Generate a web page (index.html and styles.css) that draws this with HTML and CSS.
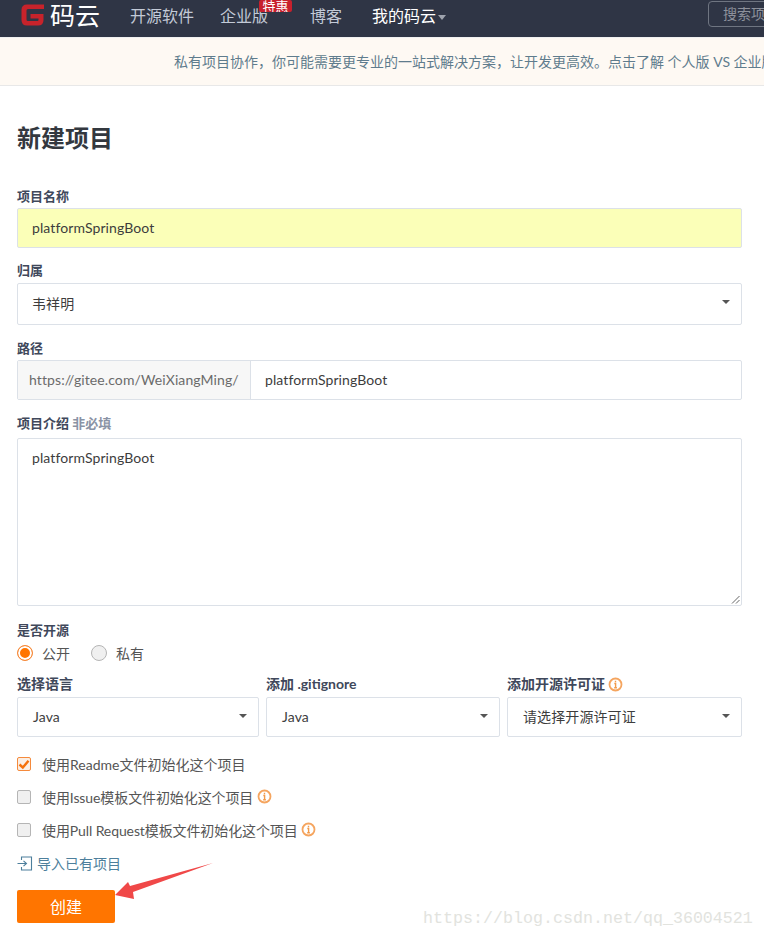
FILE: index.html
```html
<!DOCTYPE html>
<html lang="zh">
<head>
<meta charset="utf-8">
<title>新建项目</title>
<link rel="stylesheet" href="styles.css">
</head>
<body>
<header class="nav">
  <a class="logo">
    <svg class="logo-mark" width="25" height="24" viewBox="0 0 25 24"><path d="M24 1.500H7Q1.500 1.500 1.500 7v10Q1.500 22.500 7 22.500h11q5.500 0 5.500-5.500v-6H10.500v4.500h8v1.500q0 1-1 1H8q-1.500 0-1.500-1.500V7.500Q6.500 6 8 6h16z" fill="#c7232b"/></svg>
    <span class="logo-text">码云</span>
  </a>
  <nav class="nav-links">
    <a class="nav-link nav-open">开源软件</a>
    <a class="nav-link nav-ent">企业版<span class="badge">特惠</span></a>
    <a class="nav-link nav-blog">博客</a>
    <a class="nav-link nav-mine">我的码云<i class="caret-light"></i></a>
  </nav>
  <div class="search">搜索项目</div>
</header>
<div class="notice">私有项目协作，你可能需要更专业的一站式解决方案，让开发更高效。点击了解 个人版 VS 企业版</div>
<main class="main">
  <h1 class="title">新建项目</h1>
  <form class="form">
    <div class="field f-name">
      <label class="label">项目名称</label>
      <div class="control control-yellow">platformSpringBoot</div>
    </div>
    <div class="field f-owner">
      <label class="label">归属</label>
      <div class="control control-select">韦祥明<i class="caret"></i></div>
    </div>
    <div class="field f-path">
      <label class="label">路径</label>
      <div class="path-group">
        <span class="path-prefix">https://gitee.com/WeiXiangMing/</span>
        <span class="path-value">platformSpringBoot</span>
      </div>
    </div>
    <div class="field f-desc">
      <label class="label">项目介绍 <span class="optional">非必填</span></label>
      <div class="textarea">platformSpringBoot
        <svg class="grip" width="9" height="9" viewBox="0 0 9 9"><path d="M8.500 1 1 8.500M8.500 5 5 8.500" stroke="#666" fill="none"/></svg>
      </div>
    </div>
    <div class="field f-open">
      <label class="label">是否开源</label>
      <div class="radios">
        <span class="radio-item"><i class="radio radio-on"></i>公开</span>
        <span class="radio-item"><i class="radio"></i>私有</span>
      </div>
    </div>
    <div class="select-row">
      <div class="select-col">
        <label class="label">选择语言</label>
        <div class="control control-select control-short">Java<i class="caret"></i></div>
      </div>
      <div class="select-col">
        <label class="label">添加 .gitignore</label>
        <div class="control control-select control-short">Java<i class="caret"></i></div>
      </div>
      <div class="select-col">
        <label class="label">添加开源许可证 <svg class="info" width="15" height="15" viewBox="0 0 15 15"><circle cx="7.500" cy="7.500" r="6" fill="none" stroke="#f5a55f" stroke-width="1.800"/><path d="M7.500 3.800v1.500M6.300 6.500h1.300v4M6.200 10.700h2.700" fill="none" stroke="#f29a4a" stroke-width="1.400"/></svg></label>
        <div class="control control-select control-short">请选择开源许可证<i class="caret"></i></div>
      </div>
    </div>
    <div class="checks">
      <div class="check-row"><i class="check check-on"><svg width="14" height="14" viewBox="0 0 14 14"><path d="M2.500 7.500 5.800 10.500 11.500 3.800" fill="none" stroke="#f5700a" stroke-width="2.400"/></svg></i>使用Readme文件初始化这个项目</div>
      <div class="check-row check-tight"><i class="check"></i>使用Issue模板文件初始化这个项目 <svg class="info" width="15" height="15" viewBox="0 0 15 15"><circle cx="7.500" cy="7.500" r="6" fill="none" stroke="#f5a55f" stroke-width="1.800"/><path d="M7.500 3.800v1.500M6.300 6.500h1.300v4M6.200 10.700h2.700" fill="none" stroke="#f29a4a" stroke-width="1.400"/></svg></div>
      <div class="check-row check-tight"><i class="check"></i>使用Pull Request模板文件初始化这个项目 <svg class="info" width="15" height="15" viewBox="0 0 15 15"><circle cx="7.500" cy="7.500" r="6" fill="none" stroke="#f5a55f" stroke-width="1.800"/><path d="M7.500 3.800v1.500M6.300 6.500h1.300v4M6.200 10.700h2.700" fill="none" stroke="#f29a4a" stroke-width="1.400"/></svg></div>
    </div>
    <a class="import"><svg width="16" height="15" viewBox="0 0 16 15"><path d="M4.500 4V1h10v13h-10v-3M0.500 7.500h9M6.500 4.800l3 2.700-3 2.700" fill="none" stroke="#4d7f9c" stroke-width="1.100"/></svg>导入已有项目</a>
    <button class="submit" type="button">创建</button>
  </form>
</main>
<svg class="arrow" width="106" height="40" viewBox="0 0 106 40"><path d="M0 33 13 20 15 24 98 1 18 30 19 37Z" fill="#f04848"/></svg>
<div class="watermark">https://blog.csdn.net/qq_36004521</div>
</body>
</html>
```
FILE: styles.css
```css
* { box-sizing: border-box; }
html, body { margin: 0; padding: 0; }
body {
  width: 764px;
  height: 939px;
  overflow: hidden;
  position: relative;
  background: #fff;
  color: #40485b;
  font-family: Lato, "Noto Sans CJK SC", sans-serif;
  font-size: 14px;
}
.nav {
  height: 37px;
  background: #2f3545;
  display: flex;
  align-items: center;
  padding-left: 20px;
  overflow: hidden;
  white-space: nowrap;
}
.logo { display: flex; flex: none; align-items: center; gap: 5px; width: 110px; height: 37px; padding-bottom: 8px; }
.logo-mark { flex: none; }
.logo-text { color: #fff; font-size: 25px; line-height: 28px; font-weight: 400; }
.nav-links { display: flex; flex: none; }
.nav-link { position: relative; color: #c3cad7; font-size: 16px; line-height: 30px; padding-bottom: 6px; }
.nav-open { margin-right: 26px; }
.nav-ent { margin-right: 42px; }
.nav-blog { margin-right: 30px; }
.nav-mine { color: #fff; }
.badge {
  position: absolute;
  left: 39px;
  top: -1px;
  width: 33px;
  height: 12px;
  line-height: 12px;
  background: #c8202d;
  color: #fff;
  font-size: 13px;
  text-align: center;
  border-radius: 2px;
  overflow: hidden;
}
.caret-light {
  display: inline-block;
  margin-left: 2px;
  vertical-align: 2px;
  border: 4px solid transparent;
  border-top: 5px solid #9ea3ad;
  border-bottom: 0;
}
.search {
  margin-left: 262px;
  align-self: flex-start;
  margin-top: 1px;
  flex: none;
  width: 80px;
  height: 26px;
  border: 1px solid #6f7581;
  border-radius: 4px;
  color: #8d919b;
  font-size: 14px;
  line-height: 24px;
  padding-left: 14px;
}
.notice {
  height: 49px;
  background: #fef9f3;
  border-bottom: 1px solid #e8e8e8;
  border-top: 1px solid #f0f0f0;
  padding-left: 174px;
  color: #5f7c8d;
  font-size: 14px;
  line-height: 47px;
  white-space: nowrap;
  overflow: hidden;
}
.main { padding: 0 22px 0 17px; }
.title { margin: 35px 0 0; height: 34px; line-height: 34px; font-size: 24px; font-weight: 700; color: #33383f; }
.form { display: block; }
.label { display: block; font-weight: 700; font-size: 13px; line-height: 18px; color: #40485b; }
.optional { color: #8a93a5; }
.f-name { margin-top: 32px; }
.f-name .label { margin-bottom: 3px; }
.f-owner { margin-top: 13px; }
.f-owner .label { margin-bottom: 4px; }
.f-path { margin-top: 14px; }
.f-path .label { margin-bottom: 3px; }
.f-desc { margin-top: 14px; }
.f-desc .label { margin-bottom: 6px; }
.f-open { margin-top: 15px; }
.control {
  display: block;
  position: relative;
  height: 42px;
  border: 1px solid #dce1e8;
  border-radius: 2px;
  padding-left: 14px;
  line-height: 40px;
  color: #3d3d3d;
  letter-spacing: 0.1px;
}
.control-yellow { height: 40px; line-height: 38px; background: #fbffb8; }
.control-short { height: 40px; line-height: 38px; padding-left: 15px; }
.caret {
  position: absolute;
  right: 11px;
  top: 16px;
  border: 4px solid transparent;
  border-top: 4px solid #555;
  border-bottom: 0;
}
.path-group { display: flex; height: 40px; border: 1px solid #dce1e8; border-radius: 2px; line-height: 38px; letter-spacing: 0.1px; }
.path-prefix { width: 233px; flex: none; background: #f7f7f7; border-right: 1px solid #dce1e8; padding-left: 11px; color: #6b6b6b; }
.path-value { padding-left: 14px; color: #3d3d3d; }
.textarea {
  position: relative;
  height: 168px;
  border: 1px solid #dce1e8;
  border-radius: 2px;
  padding: 9px 14px;
  line-height: 20px;
  color: #3d3d3d;
  letter-spacing: 0.1px;
}
.grip { position: absolute; right: 1px; bottom: 1px; }
.radios { display: flex; gap: 21px; margin-top: 5px; height: 18px; align-items: center; color: #555; }
.radio-item { display: flex; align-items: center; gap: 9px; }
.radio { width: 16px; height: 16px; border-radius: 50%; border: 1px solid #b5b5b5; background: #f0f0f0; display: block; }
.radio-on { border-color: #f58a3c; background: #ff7500; box-shadow: inset 0 0 0 2px #fff; }
.select-row { display: grid; grid-template-columns: 242px 234px 235px; gap: 7px; margin-top: 13px; }
.select-col .label { margin-bottom: 4px; font-size: 14px; }
.checks { margin-top: 10px; }
.check-row { display: flex; align-items: center; height: 33px; color: #555; white-space: pre; }
.check-tight { letter-spacing: -0.1px; }
.check {
  width: 14px;
  height: 14px;
  flex: none;
  margin-right: 11px;
  border: 1px solid #b5b5b5;
  border-radius: 2px;
  background: #f0f0f0;
  display: block;
}
.check svg { display: block; margin: -1px; }
.check-on { border-color: #f58a3c; background: #fbeee3; }
.info { display: inline-block; vertical-align: -3px; flex: none; }
.import { display: flex; align-items: center; height: 20px; margin-top: 7px; color: #4d7f9c; gap: 4px; }
.submit {
  display: block;
  margin-top: 17px;
  width: 98px;
  height: 33px;
  border: 0;
  border-radius: 2px;
  background: #ff7500;
  color: #fff;
  font: inherit;
  font-size: 16px;
  line-height: 33px;
  padding: 0;
}
.arrow { position: absolute; left: 115px; top: 862px; }
.watermark {
  position: absolute;
  left: 423px;
  top: 909px;
  font-family: "Liberation Mono", monospace;
  font-size: 16.670px;
  line-height: 20px;
  color: #e2e3de;
  white-space: nowrap;
}
```
